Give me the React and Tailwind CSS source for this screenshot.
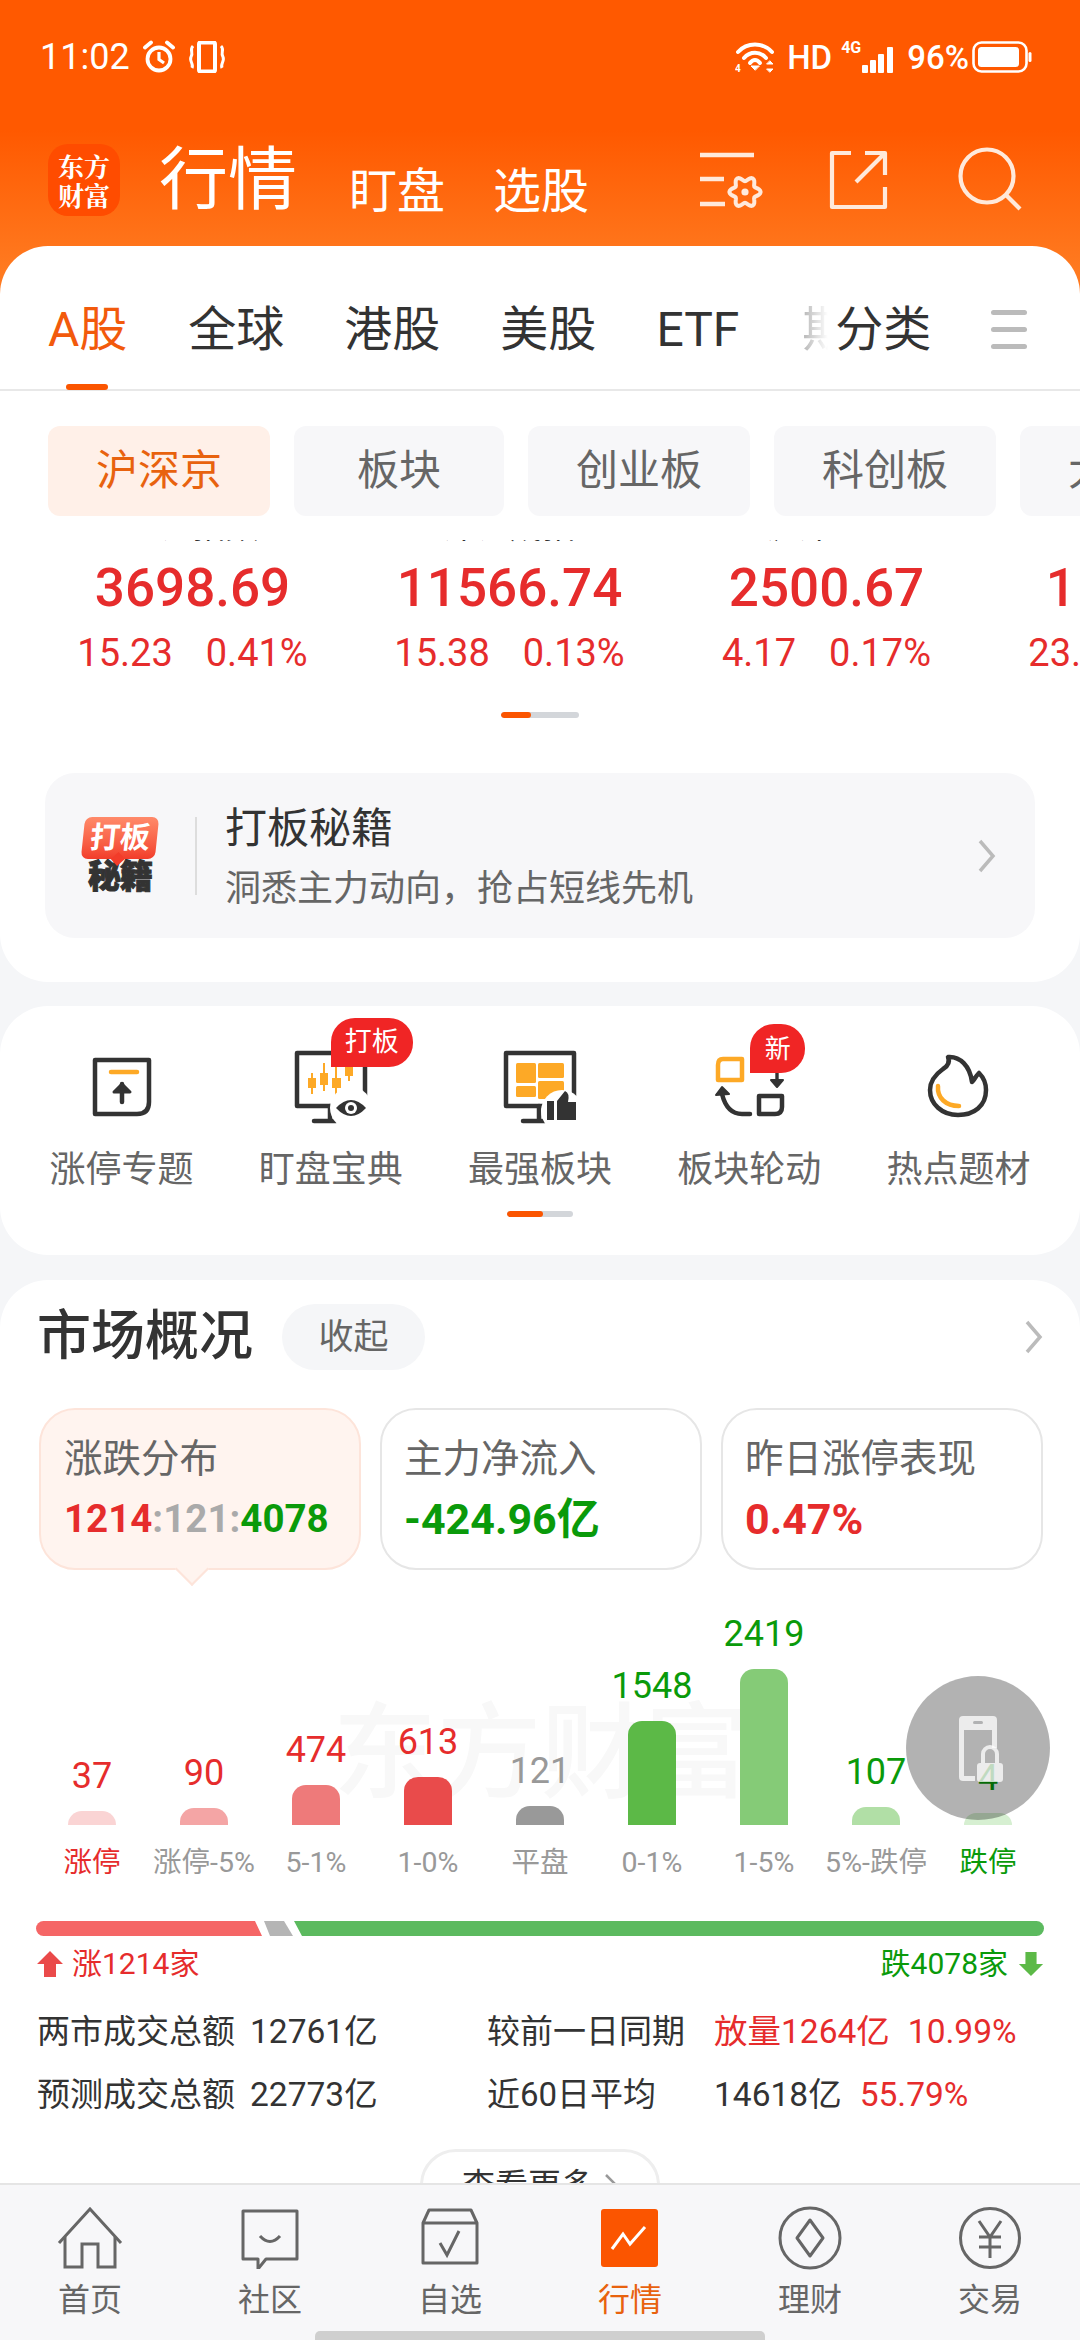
import React from "react";

const RED = "text-[#e62c2c]";

function StatusLeftIcons() {
  return (
    <>
      <svg width="34" height="34" viewBox="0 0 34 34" className="ml-[12px]" fill="none" stroke="#fff" strokeWidth="3.8">
        <circle cx="17" cy="19" r="11.5" />
        <path d="M17 12V19.5L22 23" strokeWidth="3.2" />
        <path d="M3 7.5L9 2.5M31 7.5L25 2.5" strokeLinecap="round" />
      </svg>
      <svg width="40" height="32" viewBox="0 0 40 32" className="ml-[11px]" fill="none" stroke="#fff" strokeWidth="3">
        <rect x="12" y="1.5" width="16" height="29" rx="1.5" strokeWidth="4" />
        <path d="M6 5C2 9 7 12 4 16C2 20 7 23 5 27M34 5C38 9 33 12 36 16C38 20 33 23 35 27" strokeWidth="3" />
      </svg>
    </>
  );
}

function StatusRightIcons() {
  return (
    <div className="ml-auto mr-[48px] flex items-center text-white">
      <svg width="40" height="32" viewBox="0 0 40 32" fill="none" stroke="#fff" strokeLinecap="round">
        <path d="M3 11C12 1 28 1 37 11" strokeWidth="4" />
        <path d="M9 17C15 10 25 10 31 17" strokeWidth="4" />
        <path d="M15 22C18 18 22 18 25 22" strokeWidth="4" />
        <path d="M20 29L16 25H24Z" fill="#fff" strokeWidth="1" />
        <path d="M35 20L38 23H32ZM35 31L38 28H32Z" fill="#fff" strokeWidth="1" />
        <text x="0" y="31" fontSize="10" fontWeight="700" fill="#fff" stroke="none">4</text>
      </svg>
      <span className="ml-[12px] w-[43px] text-[33px] font-medium leading-none">HD</span>
      <div className="relative ml-[11px] h-[32px] w-[53px]">
        <span className="absolute left-0 top-[-1px] text-[16px] font-bold leading-none">4G</span>
        <svg width="34" height="26" viewBox="0 0 34 26" className="absolute left-[20px] top-[6px]" fill="#fff">
          <rect x="1" y="18" width="6" height="8" rx="1" />
          <rect x="9" y="13" width="6" height="13" rx="1" />
          <rect x="17" y="7" width="6" height="19" rx="1" />
          <rect x="26" y="0" width="6" height="26" rx="1" />
        </svg>
      </div>
      <span className="ml-[13px] text-[33px] font-medium leading-none">96%</span>
      <svg width="60" height="32" viewBox="0 0 60 32" className="ml-[3px]" fill="none">
        <rect x="1.5" y="1.5" width="53" height="29" rx="8" stroke="#fff" strokeWidth="2.6" />
        <rect x="6" y="6" width="41" height="20" rx="3.5" fill="#fff" />
        <rect x="56.5" y="11" width="3" height="10" rx="1.5" fill="#fff" />
      </svg>
    </div>
  );
}

function gearPath(cx, cy) {
  const pts = [];
  for (let i = 0; i <= 72; i++) {
    const t = (i / 72) * Math.PI * 2;
    const r = 13.2 + 2.4 * Math.cos(6 * t);
    pts.push(`${(cx + r * Math.cos(t)).toFixed(2)} ${(cy + r * Math.sin(t)).toFixed(2)}`);
  }
  return "M" + pts.join("L") + "Z";
}

function HeaderIcons() {
  const c = "#ffe9db";
  return (
    <>
      <svg width="66" height="62" viewBox="0 0 66 62" className="ml-auto" fill="none" stroke={c} strokeWidth="4.6">
        <path d="M1 6H55M1 30H25M1 55H26" />
        <path d={gearPath(46, 43)} strokeWidth="4" />
        <circle cx="46" cy="43" r="3.6" fill={c} stroke="none" />
      </svg>
      <svg width="60" height="60" viewBox="0 0 60 60" className="ml-[64px]" fill="none" stroke={c} strokeWidth="4.2" strokeLinejoin="round">
        <path d="M22 3H3V57H56V37" />
        <path d="M27 32L56 3M36 3H56V25" />
      </svg>
      <svg width="66" height="66" viewBox="0 0 66 66" className="ml-[68px] mr-[57px]" fill="none" stroke={c} strokeWidth="4.2">
        <circle cx="30" cy="29" r="26.5" />
        <path d="M49 48L63 62" />
      </svg>
    </>
  );
}

function Header() {
  return (
    <div className="h-[300px] bg-[linear-gradient(#ff5900_0,#ff5900_130px,#ff7a20_270px,#ff7a20_100%)] text-white">
      <div className="flex h-[114px] items-center pl-[40px]">
        <span className="text-[36px] leading-none">11:02</span>
        <StatusLeftIcons />
        <StatusRightIcons />
      </div>
      <div className="flex h-[132px] items-center pl-[48px]">
        <div className="flex h-[72px] w-[72px] flex-col items-center justify-center rounded-[20px] bg-[#ff4c00] text-[26px] font-bold leading-[29px] [font-family:'Noto_Serif_CJK_SC','Noto_Sans_CJK_SC',sans-serif]">
          <span>东方</span>
          <span>财富</span>
        </div>
        <span className="ml-[39px] text-[69px] leading-none">行情</span>
        <span className="ml-[52px] mt-[24px] text-[48px] leading-none">盯盘</span>
        <span className="ml-[48px] mt-[24px] text-[48px] leading-none">选股</span>
        <HeaderIcons />
      </div>
    </div>
  );
}

function MainTabs() {
  const tabs = [
    ["全球", "ml-[61px]"],
    ["港股", "ml-[60px]"],
    ["美股", "ml-[60px]"],
    ["ETF", "ml-[60px]"],
  ];
  return (
    <div className="flex h-[145px] items-center border-b-2 border-[#e8e8e8] pl-[48px] pt-[24px] text-[48px] leading-none text-[#333]">
      <div className="relative text-[#f25a0c]">
        A股
        <div className="absolute left-[18px] top-[78px] h-[6px] w-[42px] rounded-[3px] bg-[#fb5500]" />
      </div>
      {tabs.map(([t, m]) => (
        <span key={t} className={m}>{t}</span>
      ))}
      <div className="ml-[63px] w-[26px] overflow-hidden whitespace-nowrap text-[#777] [mask-image:linear-gradient(to_right,rgba(0,0,0,.55),rgba(0,0,0,0))]">期货</div>
      <span className="ml-[7px]">分类</span>
      <div className="ml-[60px] flex w-[36px] flex-col gap-[12px]">
        <div className="h-[5px] rounded-[3px] bg-[#bbb]" />
        <div className="h-[5px] rounded-[3px] bg-[#bbb]" />
        <div className="h-[5px] rounded-[3px] bg-[#bbb]" />
      </div>
    </div>
  );
}

function SubTabs() {
  const items = [
    ["沪深京", "w-[222px] bg-[#fff0e8] text-[#e8620e]"],
    ["板块", "w-[210px] bg-[#f7f7f9] text-[#666]"],
    ["创业板", "w-[222px] bg-[#f7f7f9] text-[#666]"],
    ["科创板", "w-[222px] bg-[#f7f7f9] text-[#666]"],
    ["大盘股", "w-[222px] bg-[#f7f7f9] text-[#666]"],
  ];
  return (
    <div className="mt-[35px] flex gap-[24px] overflow-hidden pl-[48px]">
      {items.map(([t, c]) => (
        <div key={t} className={`flex h-[90px] shrink-0 items-center justify-center rounded-[12px] text-[42px] leading-none ${c}`}>
          {t}
        </div>
      ))}
    </div>
  );
}

function Indices() {
  const rows = [
    ["上证指数", "3698.69", "15.23", "0.41%"],
    ["深证成指", "11566.74", "15.38", "0.13%"],
    ["沪深300", "2500.67", "4.17", "0.17%"],
    ["北证50", "1187.45", "23.10", "1.83%"],
  ];
  return (
    <div className="mt-[24px] flex overflow-hidden pl-[34px]">
      {rows.map(([n, v, a, b]) => (
        <div key={v} className={`w-[317px] shrink-0 text-center ${RED}`}>
          <div className="h-[2px] overflow-hidden">
            <div className="mt-[-30px] text-[33px] leading-[33px] text-[#333]">{n}</div>
          </div>
          <div className="mt-[19px] text-[53px] font-medium leading-[54px]">{v}</div>
          <div className="mt-[20px] flex justify-center gap-[33px] text-[38px] leading-[36px]">
            <span>{a}</span>
            <span>{b}</span>
          </div>
        </div>
      ))}
    </div>
  );
}

function Pager({ w, on }) {
  return (
    <div className={`mx-auto flex h-[6px] overflow-hidden rounded-[3px] bg-[#d3d6da] ${w}`}>
      <div className={`rounded-[3px] bg-[#fb5500] ${on}`} />
    </div>
  );
}

function Banner() {
  return (
    <div className="mx-[45px] mt-[55px] flex h-[165px] items-center rounded-[30px] bg-[#f7f7f9] pl-[35px] pr-[38px]">
      <div className="flex w-[80px] flex-col items-center">
        <div className="relative flex h-[42px] w-[74px] -skew-x-6 items-center justify-center rounded-[7px] bg-linear-to-b from-[#ff8a6a] to-[#f23c2a] text-[30px] font-bold leading-none text-white">
          打板
          <div className="absolute bottom-[-5px] left-[32px] h-[10px] w-[10px] rotate-45 bg-[#f23c2a]" />
        </div>
        <div className="mt-[1px] text-[33px] font-black leading-[34px] tracking-[-1px] text-[#333] [-webkit-text-stroke:1px_#333]">秘籍</div>
      </div>
      <div className="ml-[35px] h-[78px] w-[2px] bg-[#ddd]" />
      <div className="ml-[28px] mt-[4px]">
        <div className="text-[42px] leading-[44px] text-[#333]">打板秘籍</div>
        <div className="mt-[18px] text-[36px] leading-[40px] text-[#666]">洞悉主力动向，抢占短线先机</div>
      </div>
      <Chevron className="ml-auto" />
    </div>
  );
}

function Chevron({ className = "" }) {
  return (
    <svg width="20" height="34" viewBox="0 0 20 34" fill="none" stroke="#bbb" strokeWidth="3.5" className={className}>
      <path d="M3 2L16 17L3 32" />
    </svg>
  );
}

const S = "#333";
const O = "#fda926";

function IconUp() {
  return (
    <svg width="80" height="80" viewBox="0 0 80 80" fill="none">
      <path d="M13 11H67V53Q67 65 55 65H13Z" stroke={S} strokeWidth="4.5" strokeLinejoin="round" />
      <path d="M29 23H55" stroke={O} strokeWidth="4.5" strokeLinecap="round" />
      <path d="M40 35V53" stroke={S} strokeWidth="4.5" strokeLinecap="round" />
      <path d="M32 43L40 35L48 43Z" fill={S} stroke={S} strokeWidth="3" strokeLinejoin="round" />
    </svg>
  );
}

function IconMonitorEye() {
  return (
    <svg width="80" height="80" viewBox="0 0 80 80" fill="none">
      <path d="M6 4H74V57H6Z" stroke={S} strokeWidth="4.5" strokeLinejoin="round" />
      <path d="M23 72H45M39 57V72" stroke={S} strokeWidth="4.5" strokeLinecap="round" />
      <g stroke={O} strokeWidth="2">
        <path d="M21 24V45M33 14V42M45 18V47M58 18V32" />
      </g>
      <g fill={O}>
        <rect x="17" y="29" width="8" height="10" />
        <rect x="29" y="24" width="8" height="12" />
        <rect x="41" y="29" width="9" height="10" />
        <rect x="54" y="18" width="8" height="9" />
      </g>
      <circle cx="60" cy="59" r="21" fill="#fff" />
      <path d="M45 59Q60 43 75 59Q60 75 45 59Z" fill={S} />
      <circle cx="60" cy="59" r="6" fill="#fff" />
      <circle cx="60" cy="59" r="3" fill={S} />
    </svg>
  );
}

function IconMonitorTiles() {
  return (
    <svg width="80" height="80" viewBox="0 0 80 80" fill="none">
      <path d="M6 4H74V57H6Z" stroke={S} strokeWidth="4.5" strokeLinejoin="round" />
      <path d="M23 72H45M39 57V72" stroke={S} strokeWidth="4.5" strokeLinecap="round" />
      <g fill={O}>
        <rect x="16" y="14" width="20" height="20" rx="1.5" />
        <rect x="38" y="14" width="26" height="15" rx="1.5" />
        <rect x="16" y="37" width="20" height="11" rx="1.5" />
        <rect x="38" y="32" width="26" height="18" rx="1.5" />
      </g>
      <circle cx="62" cy="62" r="21" fill="#fff" />
      <path d="M47 52H54V71H47ZM57 52L65 42Q70 44 68 53H76V71H57Z" fill={S} />
    </svg>
  );
}

function IconRotate() {
  return (
    <svg width="80" height="80" viewBox="0 0 80 80" fill="none">
      <path d="M14 10H33V31H9V16Q9 10 14 10Z" stroke={O} strokeWidth="4.5" strokeLinejoin="round" />
      <path d="M68 20V32" stroke={S} strokeWidth="3.4" />
      <path d="M62 31H74L68 38Z" fill={S} stroke={S} strokeWidth="2" strokeLinejoin="round" />
      <path d="M50 47H73V58Q73 65 66 65H50Z" stroke={S} strokeWidth="4.5" strokeLinejoin="round" />
      <path d="M41 65H33Q18 65 13 45" stroke={S} strokeWidth="4.5" strokeLinecap="round" />
      <path d="M7 46L13 38L20 45Z" fill={S} stroke={S} strokeWidth="2" strokeLinejoin="round" />
    </svg>
  );
}

function IconFlame() {
  return (
    <svg width="80" height="80" viewBox="0 0 80 80" fill="none">
      <g transform="translate(0 -3)">
        <path
          d="M30 11C42 10 52 20 54 36C56 34 58 30 61 27C66 32 68 38 68 44C68 60 56 69 40 69C24 69 12 58 12 44C12 34 18 28 25 23C30 20 32 16 30 11Z"
          stroke={S}
          strokeWidth="4.5"
          strokeLinejoin="round"
        />
        <path d="M20 40C19 52 28 60 41 60" stroke={O} strokeWidth="4.5" strokeLinecap="round" />
      </g>
    </svg>
  );
}

function Shortcuts() {
  const items = [
    ["涨停专题", <IconUp key="a" />, null],
    ["盯盘宝典", <IconMonitorEye key="b" />, "打板"],
    ["最强板块", <IconMonitorTiles key="c" />, null],
    ["板块轮动", <IconRotate key="d" />, "新"],
    ["热点题材", <IconFlame key="e" />, null],
  ];
  return (
    <div className="mt-[24px] h-[249px] rounded-[48px] bg-white pt-[43px]">
      <div className="grid grid-cols-5 px-[17px]">
        {items.map(([t, icon, badge]) => (
          <div key={t} className="flex flex-col items-center">
            <div className="relative h-[80px] w-[80px]">
              {icon}
              {badge === "打板" && (
                <div className="absolute left-[40px] top-[-31px] flex h-[49px] w-[82px] items-center justify-center rounded-[24px] rounded-bl-none bg-[#f02525] text-[27px] leading-none text-white">
                  {badge}
                </div>
              )}
              {badge === "新" && (
                <div className="absolute left-[41px] top-[-25px] flex h-[49px] w-[55px] items-center justify-center rounded-[24px] rounded-bl-none bg-[#f02525] text-[26px] leading-none text-white">
                  {badge}
                </div>
              )}
            </div>
            <span className="mt-[21px] text-[36px] leading-[40px] text-[#666]">{t}</span>
          </div>
        ))}
      </div>
      <div className="mt-[21px]">
        <Pager w="w-[66px]" on="w-[36px]" />
      </div>
    </div>
  );
}

function StatCards() {
  return (
    <div className="ml-[39px] mt-[14px] flex gap-[19px]">
      <div className="relative h-[162px] w-[322px] rounded-[36px] border-2 border-[#fde4da] bg-[#fff4ef] pl-[23px] pt-[30px]">
        <div className="text-[38.5px] leading-[38px] text-[#666]">涨跌分布</div>
        <div className="mt-[21px] text-[38.5px] font-bold leading-[40px]">
          <span className="text-[#e62c2c]">1214</span>
          <span className="text-[#aaa]">:121:</span>
          <span className="text-[#0a9a0a]">4078</span>
        </div>
        <div className="absolute bottom-[-13px] left-[139px] h-[24px] w-[24px] rotate-45 border-b-2 border-r-2 border-[#fde4da] bg-[#fff4ef]" />
      </div>
      <div className="h-[162px] w-[322px] rounded-[36px] border-2 border-[#e6e6e6] pl-[22px] pt-[30px]">
        <div className="text-[38.5px] leading-[38px] text-[#666]">主力净流入</div>
        <div className="mt-[21px] text-[43px] font-bold leading-[40px] text-[#0a9a0a]">-424.96亿</div>
      </div>
      <div className="h-[162px] w-[322px] rounded-[36px] border-2 border-[#e6e6e6] pl-[22px] pt-[30px]">
        <div className="text-[38.5px] leading-[38px] text-[#666]">昨日涨停表现</div>
        <div className="mt-[21px] text-[43px] font-bold leading-[40px] text-[#e62c2c]">0.47%</div>
      </div>
    </div>
  );
}

function Chart() {
  const G = "text-[#0a9a0a]";
  const bars = [
    ["37", "h-[14px] bg-[#fad4d4]", RED, "涨停", RED],
    ["90", "h-[17px] bg-[#f4a5a5]", RED, "涨停-5%", "text-[#999]"],
    ["474", "h-[40px] bg-[#ee7a7a]", RED, "5-1%", "text-[#999]"],
    ["613", "h-[48px] bg-[#e94b4b]", RED, "1-0%", "text-[#999]"],
    ["121", "h-[19px] bg-[#999]", "text-[#999]", "平盘", "text-[#999]"],
    ["1548", "h-[104px] bg-[#5cb947]", G, "0-1%", "text-[#999]"],
    ["2419", "h-[156px] bg-[#85cb77]", G, "1-5%", "text-[#999]"],
    ["107", "h-[18px] bg-[#b1dfa6]", G, "5%-跌停", "text-[#999]"],
    ["4", "h-[12px] bg-[#d6efd1]", G, "跌停", G],
  ];
  return (
    <div className="relative mt-[15px] px-[36px]">
      <div className="absolute left-[333px] top-[118px] whitespace-nowrap text-[104px] font-medium leading-none text-[#f8f8f8]">东方财富</div>
      <div className="relative grid h-[240px] grid-cols-9 items-end">
        {bars.map(([n, bar, c]) => (
          <div key={n} className="flex flex-col items-center">
            <span className={`mb-[17px] text-[36px] leading-[36px] ${c}`}>{n}</span>
            <div className={`w-[48px] rounded-t-[14px] ${bar}`} />
          </div>
        ))}
      </div>
      <div className="relative mt-[23px] grid grid-cols-9">
        {bars.map(([n, , , l, c]) => (
          <div key={n} className={`whitespace-nowrap text-center text-[28.5px] leading-[30px] ${c}`}>{l}</div>
        ))}
      </div>
    </div>
  );
}

function Ratio() {
  return (
    <div className="mx-[36px] mt-[43px]">
      <div className="flex h-[15px] overflow-hidden rounded-[8px]">
        <div className="w-[226px] shrink-0 bg-[#f56666] [clip-path:polygon(0_0,219px_0,100%_100%,0_100%)]" />
        <div className="ml-[2px] w-[29px] shrink-0 bg-[#b5b5b5] [clip-path:polygon(0_0,20px_0,100%_100%,6px_100%)]" />
        <div className="ml-[1px] flex-1 bg-[#5cba5f] [clip-path:polygon(0_0,100%_0,100%_100%,8px_100%)]" />
      </div>
      <div className="mt-[13px] flex h-[30px] items-center justify-between text-[30px] leading-[30px]">
        <div className="flex items-center gap-[8px] text-[#e62c2c]">
          <svg width="28" height="28" viewBox="0 0 28 28" fill="#ea4a4a">
            <path d="M14 1L27 14H20V27H8V14H1Z" strokeLinejoin="round" />
          </svg>
          <span>涨1214家</span>
        </div>
        <div className="flex items-center gap-[10px] text-[#0a9a0a]">
          <span>跌4078家</span>
          <svg width="26" height="28" viewBox="0 0 28 28" fill="#5cb947">
            <path d="M14 27L27 14H20V1H8V14H1Z" />
          </svg>
        </div>
      </div>
    </div>
  );
}

function Volume() {
  const v = "text-[33.5px]";
  return (
    <div className="ml-[37px] mt-[33px] grid grid-cols-[213px_237px_227px_auto] gap-y-[23px] text-[33px] leading-[40px] text-[#333]">
      <span>两市成交总额</span>
      <span className={v}>12761亿</span>
      <span>较前一日同期</span>
      <span className={`flex gap-[18px] text-[#e62c2c] ${v}`}>
        <span>放量1264亿</span>
        <span>10.99%</span>
      </span>
      <span>预测成交总额</span>
      <span className={v}>22773亿</span>
      <span>近60日平均</span>
      <span className={`flex gap-[18px] ${v}`}>
        <span>14618亿</span>
        <span className="text-[#e62c2c]">55.79%</span>
      </span>
    </div>
  );
}

function Overview() {
  return (
    <div className="mt-[25px] rounded-t-[48px] bg-white">
      <div className="flex h-[114px] items-center pl-[37px] pr-[36px]">
        <span className="text-[54px] font-medium leading-none text-[#333]">市场概况</span>
        <div className="ml-[29px] flex h-[66px] w-[143px] items-center justify-center rounded-[33px] bg-[#f5f6f8] text-[35px] leading-none text-[#666]">收起</div>
        <Chevron className="ml-auto" />
      </div>
      <StatCards />
      <Chart />
      <Ratio />
      <Volume />
      <div className="mx-auto mt-[34px] flex h-[72px] w-[240px] items-center justify-center gap-[10px] rounded-[36px] border-[3px] border-[#eee] text-[33px] leading-none text-[#333]">
        <span>查看更多</span>
        <svg width="14" height="24" viewBox="0 0 14 24" fill="none" stroke="#999" strokeWidth="2.5"><path d="M2 2L12 12L2 22" /></svg>
      </div>
    </div>
  );
}

function Nav() {
  const ic = { fill: "none", stroke: "#666", strokeWidth: 3 };
  const items = [
    ["首页", <svg key="a" width="66" height="62" viewBox="0 0 66 62" {...ic}><path d="M2 36L33 2L64 36" /><path d="M8 30V60H25V37H41V60H58V30" /></svg>],
    ["社区", <svg key="b" width="60" height="62" viewBox="0 0 60 62" {...ic}><path d="M3 4H57V52H26L18 62V52H3Z" strokeLinejoin="round" /><path d="M20 29Q30 40 40 29" /></svg>],
    ["自选", <svg key="c" width="60" height="62" viewBox="0 0 60 62" {...ic}><path d="M3 16L9 3H51L57 16V56H3ZM3 16H57" strokeLinejoin="round" /><path d="M20 36L27 48L39 24" /></svg>],
    ["行情", <svg key="d" width="60" height="62" viewBox="0 0 60 62" fill="none"><rect x="1" y="2" width="57" height="58" rx="3" fill="#fb5500" /><path d="M12 42L23 27L30 37L45 20" stroke="#fff" strokeWidth="3" /></svg>],
    ["理财", <svg key="e" width="66" height="64" viewBox="0 0 66 64" {...ic}><circle cx="33" cy="32" r="30" /><path d="M33 14L46 32L33 50L20 32Z" strokeLinejoin="round" /></svg>],
    ["交易", <svg key="f" width="64" height="64" viewBox="0 0 64 64" {...ic}><circle cx="32" cy="32" r="29.5" /><path d="M21 15L32 31L43 15M21 31H43M21 41H43M32 31V52" /></svg>],
  ];
  return (
    <div className="flex h-[157px] shrink-0 flex-col border-t-2 border-[#e5e5e5] bg-[#f7f7f9]">
      <div className="grid grid-cols-6 pt-[21px]">
        {items.map(([t, icon]) => (
          <div key={t} className="flex flex-col items-center">
            <div className="flex h-[64px] items-center justify-center">{icon}</div>
            <span className={`mt-[12px] text-[32px] leading-[36px] ${t === "行情" ? "text-[#e8620e]" : "text-[#666]"}`}>{t}</span>
          </div>
        ))}
      </div>
      <div className="mx-auto mt-auto h-[9px] w-[450px] rounded-t-[5px] bg-[#cfcfcf]" />
    </div>
  );
}

function Floating() {
  return (
    <div className="absolute left-[906px] top-[1676px] flex h-[144px] w-[144px] items-center justify-center rounded-full bg-black/30">
      <svg width="55" height="75" viewBox="0 0 55 75" className="ml-[8px]">
        <g fill="#fff" fillOpacity="0.75">
          <path d="M4 9Q4 5 8 5H38Q42 5 42 9V37H37V19H9V65H20V70H8Q4 70 4 66Z" />
          <rect x="22" y="52" width="26" height="19" rx="3" />
        </g>
        <rect x="18" y="10" width="10" height="3" rx="1.5" fill="#b1b2b3" />
        <path d="M28 52V43A7 7 0 0 1 42 43V52" fill="none" stroke="#fff" strokeOpacity="0.75" strokeWidth="4" />
      </svg>
    </div>
  );
}

export default function App() {
  return (
    <div className="relative flex h-[2340px] w-[1080px] flex-col overflow-hidden bg-[#f5f6f8] [font-family:Roboto,'Noto_Sans_CJK_SC',sans-serif]">
      <div className="min-h-0 flex-1 overflow-hidden">
        <Header />
        <div className="relative -mt-[54px] h-[736px] rounded-[48px] bg-white">
          <MainTabs />
          <SubTabs />
          <Indices />
          <div className="mt-[41px]">
            <Pager w="w-[78px]" on="w-[30px]" />
          </div>
          <Banner />
        </div>
        <Shortcuts />
        <Overview />
      </div>
      <Nav />
      <Floating />
    </div>
  );
}
